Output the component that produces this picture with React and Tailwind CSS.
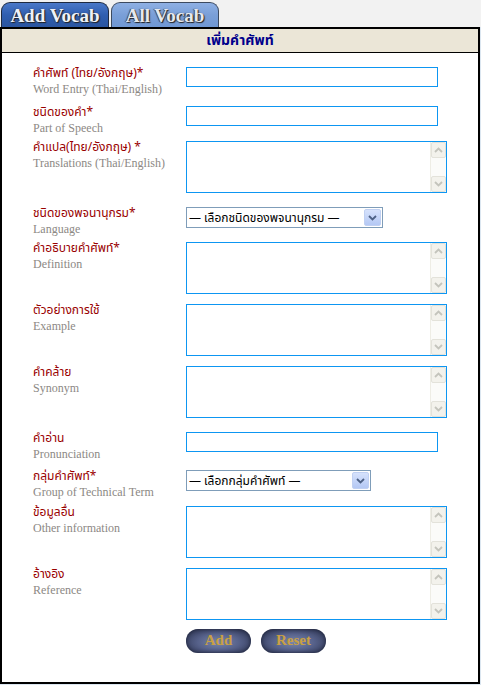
import { useState } from "react";

const thai = { fontFamily: 'Tahoma, "Noto Sans Thai", "Noto Sans", "DejaVu Sans", sans-serif' };
const serif = { fontFamily: '"Liberation Serif", "Times New Roman", serif' };

const rows = [
  { th: "คำศัพท์ (ไทย/อังกฤษ)*", en: "Word Entry (Thai/English)", type: "input", h: "h-[39px]" },
  { th: "ชนิดของคำ*", en: "Part of Speech", type: "input", h: "h-[35px]" },
  { th: "คำแปล(ไทย/อังกฤษ) *", en: "Translations (Thai/English)", type: "area", h: "h-[66px]" },
  { th: "ชนิดของพจนานุกรม*", en: "Language", type: "select", h: "h-[35px]", w: "w-[197px]", opt: "— เลือกชนิดของพจนานุกรม —" },
  { th: "คำอธิบายคำศัพท์*", en: "Definition", type: "area", h: "h-[62px]" },
  { th: "ตัวอย่างการใช้", en: "Example", type: "area", h: "h-[62px]" },
  { th: "คำคล้าย", en: "Synonym", type: "area", h: "h-[66px]" },
  { th: "คำอ่าน", en: "Pronunciation", type: "input", h: "h-[38px]" },
  { th: "กลุ่มคำศัพท์*", en: "Group of Technical Term", type: "select", h: "h-[36px]", w: "w-[185px]", opt: "— เลือกกลุ่มคำศัพท์ —" },
  { th: "ข้อมูลอื่น", en: "Other information", type: "area", h: "h-[62px]" },
  { th: "อ้างอิง", en: "Reference", type: "area", h: "h-[61px]" },
];

const Chevron = ({ up, color = "#c4c4bc" }) => (
  <svg width="9" height="6" viewBox="0 0 9 6">
    <path d={up ? "M1 5 L4.5 1.5 L8 5" : "M1 1 L4.5 4.5 L8 1"} stroke={color} strokeWidth="1.8" fill="none" />
  </svg>
);

const Area = () => (
  <div className="flex w-[261px] h-[52px] border border-[#0d96f2] bg-white">
    <textarea className="flex-1 resize-none outline-none text-[13px] px-1" style={thai} />
    <div className="w-[16px] flex flex-col justify-between bg-[#fbfbf9] border-l border-[#eeede5]">
      <div className="h-[16px] flex items-center justify-center bg-[#f3f2ec] border border-[#e3e2da] rounded-[2px]">
        <Chevron up />
      </div>
      <div className="h-[16px] flex items-center justify-center bg-[#f3f2ec] border border-[#e3e2da] rounded-[2px]">
        <Chevron />
      </div>
    </div>
  </div>
);

const Select = ({ w, opt }) => (
  <div className={`flex items-center ${w} h-[21px] border border-[#7f9db9] bg-white`}>
    <span className="flex-1 pl-[2px] text-[12px] text-black leading-none" style={thai}>
      {opt}
    </span>
    <div className="w-[17px] h-[17px] mr-[1px] flex items-center justify-center rounded-[2px] bg-gradient-to-b from-[#d6e2fc] to-[#b4c8f4] border border-[#c0d0f2]">
      <Chevron color="#4d6185" />
    </div>
  </div>
);

const Tab = ({ label, active }) => (
  <div
    className={`w-[108px] h-[25px] rounded-t-[9px] border border-b-0 flex items-center justify-center text-[19px] font-bold leading-none ${
      active
        ? "bg-gradient-to-b from-[#4a78c8] via-[#2f5eb0] to-[#2a55a0] border-[#1e2a40] text-[#eef2f8]"
        : "bg-gradient-to-b from-[#8eb0e4] via-[#7a9fd8] to-[#7098d4] border-[#3c4a60] text-[#e6e9ee]"
    }`}
    style={{ ...serif, textShadow: "1px 1px 1px #202020, -1px 0 1px #404040" }}
  >
    {label}
  </div>
);

const Btn = ({ label }) => (
  <button
    className="w-[65px] h-[24px] rounded-full text-[15px] font-bold text-[#c9a043] pb-[1px] shadow-[inset_0_0_4px_#1c2238]"
    style={{
      ...serif,
      background: "radial-gradient(ellipse at 50% 55%, #7a86aa 0%, #56618a 45%, #262c46 100%)",
    }}
  >
    {label}
  </button>
);

export default function App() {
  const [tab] = useState("add");

  return (
    <div className="w-[481px] h-[685px] bg-[#dbe6f0] flex flex-col">
      <div className="bg-[#f2f2f2] h-[27px] flex items-end gap-[2px] pl-[1px]">
        <Tab label="Add Vocab" active={tab === "add"} />
        <Tab label="All Vocab" active={tab === "all"} />
      </div>
      <div className="w-[480px] h-[657px] border-2 border-black bg-white flex flex-col">
        <div
          className="h-[24px] bg-[#ebe6d7] border-b border-black flex items-center justify-center text-[14px] font-bold text-[#00008b]"
          style={thai}
        >
          เพิ่มคำศัพท์
        </div>
        <div className="flex flex-col pt-[14px]">
          {rows.map((r) => (
            <div key={r.en} className={`flex items-start ${r.h}`}>
              <div className="w-[184px] pl-[31px] -mt-[2px]">
                <div className="text-[12px] leading-[16px] text-[#990000]" style={thai}>
                  {r.th}
                </div>
                <div className="text-[12px] leading-[16px] text-[#8c8884]" style={serif}>
                  {r.en}
                </div>
              </div>
              <div className="flex">
                {r.type === "input" && (
                  <input className="block w-[252px] h-[20px] border border-[#0d96f2] outline-none px-1 text-[13px]" style={thai} />
                )}
                {r.type === "area" && <Area />}
                {r.type === "select" && <Select w={r.w} opt={r.opt} />}
              </div>
            </div>
          ))}
          <div className="flex gap-[10px] pl-[184px]">
            <Btn label="Add" />
            <Btn label="Reset" />
          </div>
        </div>
      </div>
    </div>
  );
}
